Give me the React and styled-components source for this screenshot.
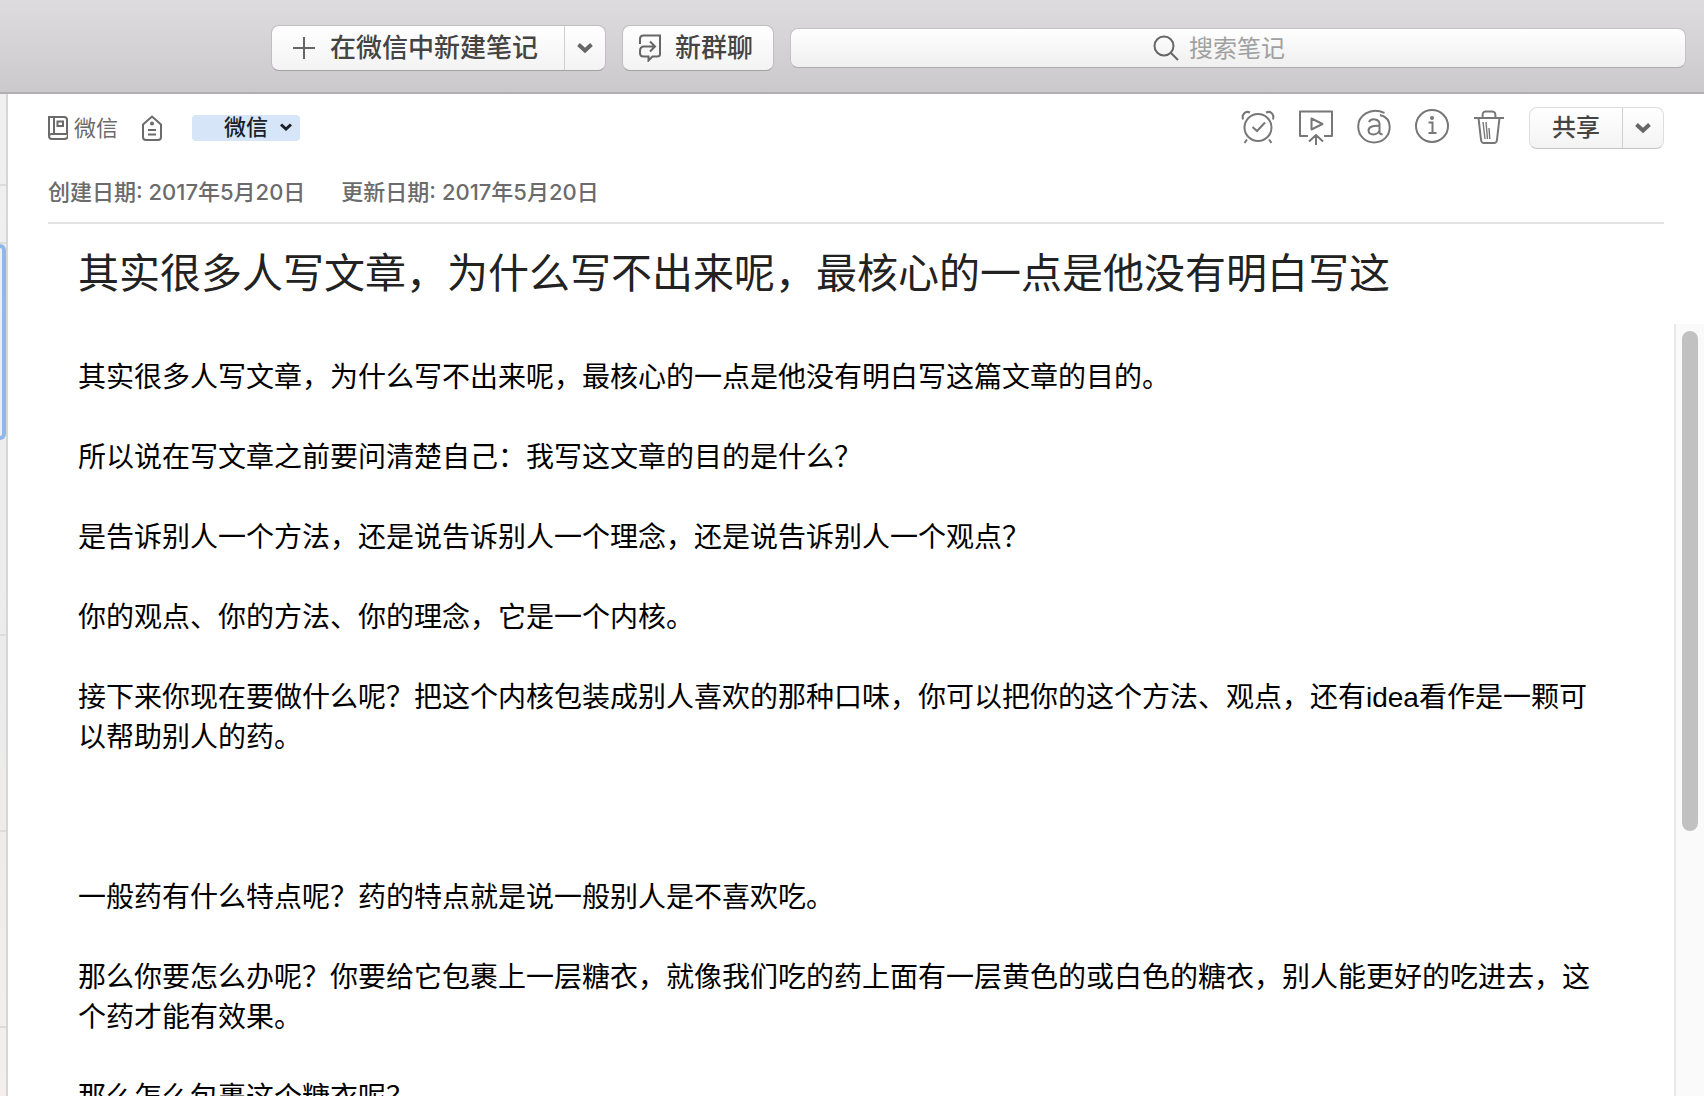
import React from 'react'
import styled, { createGlobalStyle } from 'styled-components'

const ui = `'Inter', 'Noto Sans CJK SC', sans-serif`;
const text = `'Liberation Sans', 'Noto Sans CJK SC', sans-serif`;
const grey = '#6b6b6b';
const line = '#e3e3e3';

const GlobalStyle = createGlobalStyle`
    * { box-sizing: border-box; }
    body {
        margin: 0;
        font-family: ${ui};
        background: #fff;
    }
    button, input {
        font-family: inherit;
        margin: 0;
    }
`

const Window = styled.div`
    display: flex;
    flex-direction: column;
    height: 100vh;
    overflow: hidden;
`

const Toolbar = styled.header`
    display: flex;
    align-items: center;
    gap: 16px;
    flex: none;
    height: 94px;
    padding: 4px 18px 0 271px;
    background: linear-gradient(#dedcdf, #cbc9cb);
    border-bottom: 2px solid #b1afb1;
`

const ButtonGroup = styled.div`
    display: flex;
    flex: none;
    height: ${props => props.$small ? '42px' : '46px'};
    border: 1px solid ${props => props.$small ? '#dedede' : '#c0bec0'};
    border-bottom-color: ${props => props.$small ? '#c4c4c4' : '#a3a1a3'};
    border-radius: 8px;
    background: linear-gradient(#fff, #f3f3f3);
`

const Button = styled.button`
    display: flex;
    align-items: center;
    gap: 14px;
    padding: 0 ${props => props.$pad ?? '20px'};
    border: 0;
    background: none;
    color: #444;
    font-size: ${props => props.$size ?? '26px'};
    font-weight: 500;
    line-height: 32px;
    white-space: nowrap;
    svg { color: #666; }
    & + & { border-left: 1px solid #cfcfcf; }
`

const Search = styled.label`
    display: flex;
    align-items: center;
    justify-content: center;
    gap: 10px;
    flex: 1;
    height: 40px;
    padding-right: 26px;
    border: 1px solid #c4c2c4;
    border-bottom-color: #aeacae;
    border-radius: 8px;
    background: linear-gradient(#fff, #efefef);
    color: #666;
    input {
        width: 108px;
        padding: 0;
        border: 0;
        outline: 0;
        background: none;
        font-size: 24px;
        color: #444;
    }
    input::placeholder { color: #a0a0a0; opacity: 1; }
`

const Main = styled.div`
    display: flex;
    flex: 1;
    min-height: 0;
`

const NoteList = styled.aside`
    flex: none;
    width: 8px;
    overflow: hidden;
    background: linear-gradient(#f0f0f0, #ebebeb 60%, #f4efec);
    border-right: 2px solid #d6d6d6;
`

const ListItem = styled.div`
    height: ${props => props.$height ?? '196px'};
    border-bottom: 2px solid #dcdcdc;
`

const SelectedItem = styled.div`
    height: 196px;
    border: 4px solid #8fb8ea;
    border-left: 0;
    border-radius: 0 8px 8px 0;
`

const Note = styled.main`
    display: flex;
    flex-direction: column;
    flex: 1;
    min-width: 0;
`

const NoteHeader = styled.div`
    flex: none;
    margin: 0 40px;
    border-bottom: 2px solid ${line};
`

const Row = styled.div`
    display: flex;
    align-items: center;
`

const Tools = styled(Row)`
    height: 68px;
`

const Notebook = styled.button`
    display: flex;
    align-items: center;
    gap: 6px;
    padding: 0;
    border: 0;
    background: none;
    color: ${grey};
    font-size: 22px;
    line-height: 26px;
`

const TagButton = styled(Notebook)`
    margin: 0 30px 0 24px;
`

const Tag = styled.button`
    display: flex;
    align-items: center;
    justify-content: flex-end;
    gap: 12px;
    width: 108px;
    height: 26px;
    padding: 0 8px 2px;
    border: 0;
    border-radius: 4px;
    background: #d7e5f9;
    color: #1a1f28;
    font-size: 22px;
    font-weight: 500;
    line-height: 24px;
`

const Actions = styled(Row)`
    gap: 24px;
    margin: 0 22px 0 auto;
`

const IconButton = styled.button`
    display: flex;
    padding: 0 0 2px;
    border: 0;
    background: none;
    color: #777;
`

const Dates = styled(Row)`
    gap: 36px;
    height: 60px;
    color: ${grey};
    font-size: 22px;
    font-weight: 500;
    line-height: 32px;
`

const Title = styled.h1`
    flex: none;
    margin: 0;
    padding: 20px 70px;
    color: #222;
    font-family: ${text};
    font-size: 41px;
    font-weight: 400;
    line-height: 60px;
    white-space: nowrap;
`

const Content = styled.div`
    display: flex;
    flex: 1;
    min-height: 0;
`

const Article = styled.article`
    flex: 1;
    min-width: 0;
    overflow: hidden;
    padding: 34px 72px 0 70px;
    color: #000;
    font-family: ${text};
    font-size: 28px;
    line-height: 40px;
    p { margin: 0 0 40px; }
    p:nth-of-type(5) { margin-bottom: 120px; }
`

const Track = styled.div`
    flex: none;
    width: 30px;
    padding: 7px 6px;
    background: #fafafa;
    border-left: 2px solid #e9e9e9;
`

const Thumb = styled.div`
    width: 16px;
    height: 66%;
    border-radius: 8px;
    background: #c1c1c1;
`

const Svg = ({ w, h, sw = 2, children }) => (
    <svg width={w} height={h} viewBox={`0 0 ${w} ${h}`} fill="none" stroke="currentColor" strokeWidth={sw} aria-hidden="true">
        {children}
    </svg>
)

const Chevron = () => <Svg w={16} h={12} sw={4}><path d="M1.5 2.5 L8 8.5 L14.5 2.5" /></Svg>

const actions = [
    {
        label: '提醒', icon: <>
            <circle cx="17" cy="18.5" r="13.5" />
            <path d="M11.5 18 L16 22 L24 13.5 M2 10.5 C0.5 5 4.5 1.5 9 3.5 M32 10.5 C33.5 5 29.5 1.5 25 3.5 M6 30.5 L3.5 34 M28 30.5 L30.5 34" />
        </>
    },
    {
        label: '演示', icon: <path d="M9 27 H1 V2.5 H33 V27 H25 M12.5 9.5 V20.5 L23.5 15 Z M17 36 V26 M10 32.5 L17 26 L24 32.5" strokeLinejoin="round" />
    },
    {
        label: '提及', icon: <>
            <path d="M27.5 3.8 C13 -2.5 1 7 1.2 18 C1.5 27 8.5 33.5 17 33.5 C26 33.5 32.7 27 32.7 18 C32.7 11.5 29 7.5 23 6" />
            <path d="M12 13 C14 9 22.5 9.5 22.5 15 V23 C22.5 25 24 25.5 25.5 25 M22.5 17 C17 16.5 11.5 17.5 11.5 21.5 C11.5 27 20.5 26.5 22.5 21.5" />
        </>
    },
    {
        label: '信息', icon: <>
            <circle cx="17" cy="17" r="16" />
            <path d="M13.5 13.5 H17.5 V24 M13.5 24 H21.5" />
            <circle cx="17" cy="9" r="1" />
        </>
    },
    {
        label: '删除', icon: <>
            <path d="M1 9 H31 M9.5 8.5 C9.5 4 10 2.5 12.500 2.5 H19 C22 2.5 22.5 4 22.5 8.500 M5.500 9 L8 30.5 C8.5 33.5 9 34 11 34 H21 C23 34 23.500 33.5 24 30.5 L26.500 9" />
            <path d="M10 13 L12 30 M13 13 L14.500 30 M16 19 L16.800 30" strokeWidth="1.4" />
        </>
    },
];

const paragraphs = [
    '其实很多人写文章，为什么写不出来呢，最核心的一点是他没有明白写这篇文章的目的。',
    '所以说在写文章之前要问清楚自己：我写这文章的目的是什么？',
    '是告诉别人一个方法，还是说告诉别人一个理念，还是说告诉别人一个观点？',
    '你的观点、你的方法、你的理念，它是一个内核。',
    '接下来你现在要做什么呢？把这个内核包装成别人喜欢的那种口味，你可以把你的这个方法、观点，还有idea看作是一颗可以帮助别人的药。',
    '一般药有什么特点呢？药的特点就是说一般别人是不喜欢吃。',
    '那么你要怎么办呢？你要给它包裹上一层糖衣，就像我们吃的药上面有一层黄色的或白色的糖衣，别人能更好的吃进去，这个药才能有效果。',
    '那么怎么包裹这个糖衣呢？',
];

export default function App() {
    return (
        <Window lang="zh-CN">
            <GlobalStyle />
            <Toolbar>
                <ButtonGroup>
                    <Button $pad="26px 0 20px">
                        <Svg w={24} h={24}><path d="M12 1 V23 M1 12 H23" /></Svg>
                        在微信中新建笔记
                    </Button>
                    <Button $pad="12px" aria-label="更多"><Chevron /></Button>
                </ButtonGroup>
                <ButtonGroup>
                    <Button $pad="20px 0 16px">
                        <Svg w={22} h={28}>
                            <path d="M1 10 V5 Q1 1.5 4.5 1.5 H21 V20 Q21 22.5 18 22.5 H13.5 L9.5 26.5 V22.5 H4.5 Q1 22.5 1 19 V17 Q1 12.5 5 12.5 H15 M11 7.5 L16 12.5 L11 17.5" />
                        </Svg>
                        新群聊
                    </Button>
                </ButtonGroup>
                <Search>
                    <Svg w={26} h={26}><circle cx="11" cy="11" r="9.5" /><path d="M18 18 L25 25" /></Svg>
                    <input type="text" aria-label="搜索笔记" placeholder="搜索笔记" />
                </Search>
            </Toolbar>
            <Main>
                <NoteList>
                    <ListItem $height="92px" />
                    <ListItem $height="58px" />
                    <SelectedItem />
                    <ListItem />
                    <ListItem />
                    <ListItem />
                </NoteList>
                <Note>
                    <NoteHeader>
                        <Tools>
                            <Notebook>
                                <Svg w={20} h={24}>
                                    <path d="M20 19 Q20 23 16 23 H4 Q1 23 1 20 V1 H16 Q19 1 19 4 V18 H4 Q1 18 1 20 M6 1 V18 M9.5 5.5 H15 V10 H9.5 Z" />
                                </Svg>
                                微信
                            </Notebook>
                            <TagButton aria-label="标签">
                                <Svg w={20} h={26}>
                                    <path d="M1 9.5 L10 1.5 L19 9.5 V22 Q19 25 16 25 H4 Q1 25 1 22 Z M6 15 H14 M6 19.5 H14" />
                                    <circle cx="10" cy="8.5" r="1" />
                                </Svg>
                            </TagButton>
                            <Tag>
                                微信
                                <Svg w={12} h={8} sw={3}><path d="M1 1.5 L6 6 L11 1.5" /></Svg>
                            </Tag>
                            <Actions>
                                {
                                    actions.map(({ label, icon }) => (
                                        <IconButton key={label} aria-label={label}>
                                            <Svg w={34} h={36}>{icon}</Svg>
                                        </IconButton>
                                    ))
                                }
                            </Actions>
                            <ButtonGroup $small>
                                <Button $size="24px" $pad="22px">共享</Button>
                                <Button $pad="12px" aria-label="更多共享选项"><Chevron /></Button>
                            </ButtonGroup>
                        </Tools>
                        <Dates>
                            <span>创建日期: 2017年5月20日</span>
                            <span>更新日期: 2017年5月20日</span>
                        </Dates>
                    </NoteHeader>
                    <Title>其实很多人写文章，为什么写不出来呢，最核心的一点是他没有明白写这</Title>
                    <Content>
                        <Article>
                            {paragraphs.map(p => <p key={p}>{p}</p>)}
                        </Article>
                        <Track><Thumb /></Track>
                    </Content>
                </Note>
            </Main>
        </Window>
    )
}
